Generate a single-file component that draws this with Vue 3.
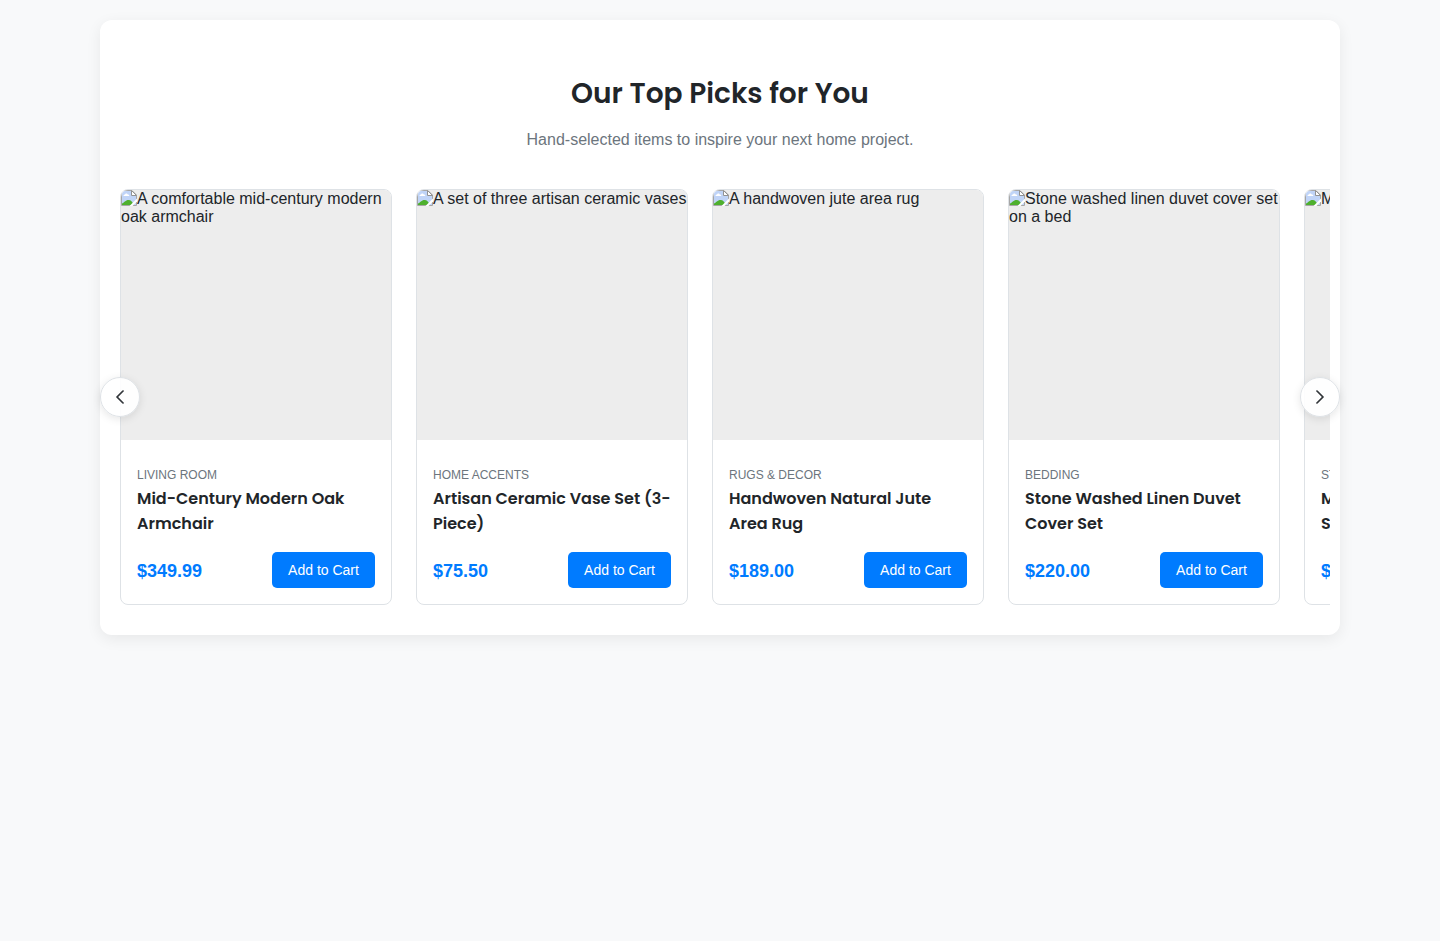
<script setup>
const products = [
  { alt: 'A comfortable mid-century modern oak armchair', category: 'Living Room', title: 'Mid-Century Modern Oak Armchair', price: '$349.99' },
  { alt: 'A set of three artisan ceramic vases', category: 'Home Accents', title: 'Artisan Ceramic Vase Set (3-Piece)', price: '$75.50' },
  { alt: 'A handwoven jute area rug', category: 'Rugs & Decor', title: 'Handwoven Natural Jute Area Rug', price: '$189.00' },
  { alt: 'Stone washed linen duvet cover set on a bed', category: 'Bedding', title: 'Stone Washed Linen Duvet Cover Set', price: '$220.00' },
  { alt: 'Minimalist wall shelf', category: 'Storage', title: 'Minimalist Floating Wall Shelf', price: '$59.99' },
]
</script>

<template>
  <section class="showcase">
    <header class="intro">
      <h2>Our Top Picks for You</h2>
      <p>Hand-selected items to inspire your next home project.</p>
    </header>
    <div class="viewport">
      <div class="track">
        <article v-for="p in products" :key="p.title" class="card">
          <div class="media">
            <svg class="missing" width="16" height="16" viewBox="0 0 16 16" aria-hidden="true">
              <path d="M.5.5H11L15.500 5v10.500H.5z" fill="#fff" stroke="#a6a6a6" />
              <path d="M1 1h9.500v4.500H15V15H1z" fill="#c0d4f7" />
              <path d="M2.500 6c0-1 .7-1.500 1.500-1.500.3-1.500 2.400-1.500 2.800.1 1 0 1.500.6 1.500 1.400z" fill="#fff" />
              <path d="M1 15v-1.500C3 12.800 4.500 10 7.500 10c2.500 0 4.300 2 5.300 5z" fill="#4eb02e" />
              <path d="M10.500.5 15.500 5.500h-5z" fill="#fff" stroke="#929292" />
              <path d="M16 8.500 8.500 16h3L16 11.500z" fill="#fff" />
            </svg>{{ p.alt }}
          </div>
          <div class="details">
            <span class="category">{{ p.category }}</span>
            <h3>{{ p.title }}</h3>
            <div class="buy">
              <span class="price">{{ p.price }}</span>
              <button class="add">Add to Cart</button>
            </div>
          </div>
        </article>
      </div>
    </div>
    <button class="arrow prev" aria-label="Previous">
      <svg viewBox="0 0 16 16"><path d="M11.354 1.646a.5.5 0 0 1 0 .708L5.707 8l5.647 5.646a.5.5 0 0 1-.708.708l-6-6a.5.5 0 0 1 0-.708l6-6a.5.5 0 0 1 .708 0z" /></svg>
    </button>
    <button class="arrow next" aria-label="Next">
      <svg viewBox="0 0 16 16"><path d="M4.646 1.646a.5.5 0 0 1 .708 0l6 6a.5.5 0 0 1 0 .708l-6 6a.5.5 0 0 1-.708-.708L10.293 8 4.646 2.354a.5.5 0 0 1 0-.708z" /></svg>
    </button>
  </section>
</template>

<style>
body { background: #f8f9fa; }
</style>

<style scoped>
* { box-sizing: border-box; }
.showcase {
  position: relative;
  width: 1240px;
  height: 615px;
  margin: 20px auto;
  padding: 50px 10px 30px;
  background: #fff;
  border-radius: 12px;
  box-shadow: 0 4px 15px rgba(0, 0, 0, 0.07);
  font: 16px "Helvetica Neue", Helvetica, "Liberation Sans", Arial, sans-serif;
  color: #212529;
}
.intro { height: 119px; text-align: center; }
h2 { margin: 0; font: 600 28px/48px Poppins, Inter, sans-serif; }
.intro p { margin: 9px 0 0; line-height: 26px; color: #6c757d; }
.viewport { padding: 0 10px; overflow: hidden; }
.track { display: flex; gap: 24px; }
.card {
  flex: 0 0 272px;
  height: 416px;
  border: 1px solid #dee2e6;
  border-radius: 8px;
  background: #fff;
  overflow: hidden;
}
.media { height: 250px; background: #ededed; line-height: 18px; overflow: hidden; }
.missing { display: inline-block; vertical-align: -2px; }
.details { padding: 25px 16px 16px; }
.category { display: block; font-size: 12px; line-height: 20px; color: #6c757d; text-transform: uppercase; }
h3 { max-width: 238px; margin: 1px 0 16px; font: 600 16px/25px Poppins, Inter, sans-serif; }
.card:last-child h3 { padding-right: 20px; }
.buy { display: flex; justify-content: space-between; align-items: center; }
.price { padding-top: 2px; font-size: 18px; font-weight: 700; color: #007bff; }
.add {
  width: 103px;
  height: 36px;
  padding: 0;
  border: 0;
  border-radius: 5px;
  background: #007bff;
  color: #fff;
  font: 14px "Helvetica Neue", Helvetica, "Liberation Sans", Arial, sans-serif;
}
.arrow {
  position: absolute;
  top: 357px;
  width: 40px;
  height: 40px;
  display: flex;
  align-items: center;
  justify-content: center;
  padding: 0;
  border: 1px solid #dee2e6;
  border-radius: 50%;
  background: rgba(255, 255, 255, 0.9);
  box-shadow: 0 2px 8px rgba(0, 0, 0, 0.1);
}
.arrow svg { width: 16px; height: 16px; fill: #212529; stroke: #212529; stroke-width: 0.7; }
.prev { left: 0; }
.next { right: 0; }
</style>
